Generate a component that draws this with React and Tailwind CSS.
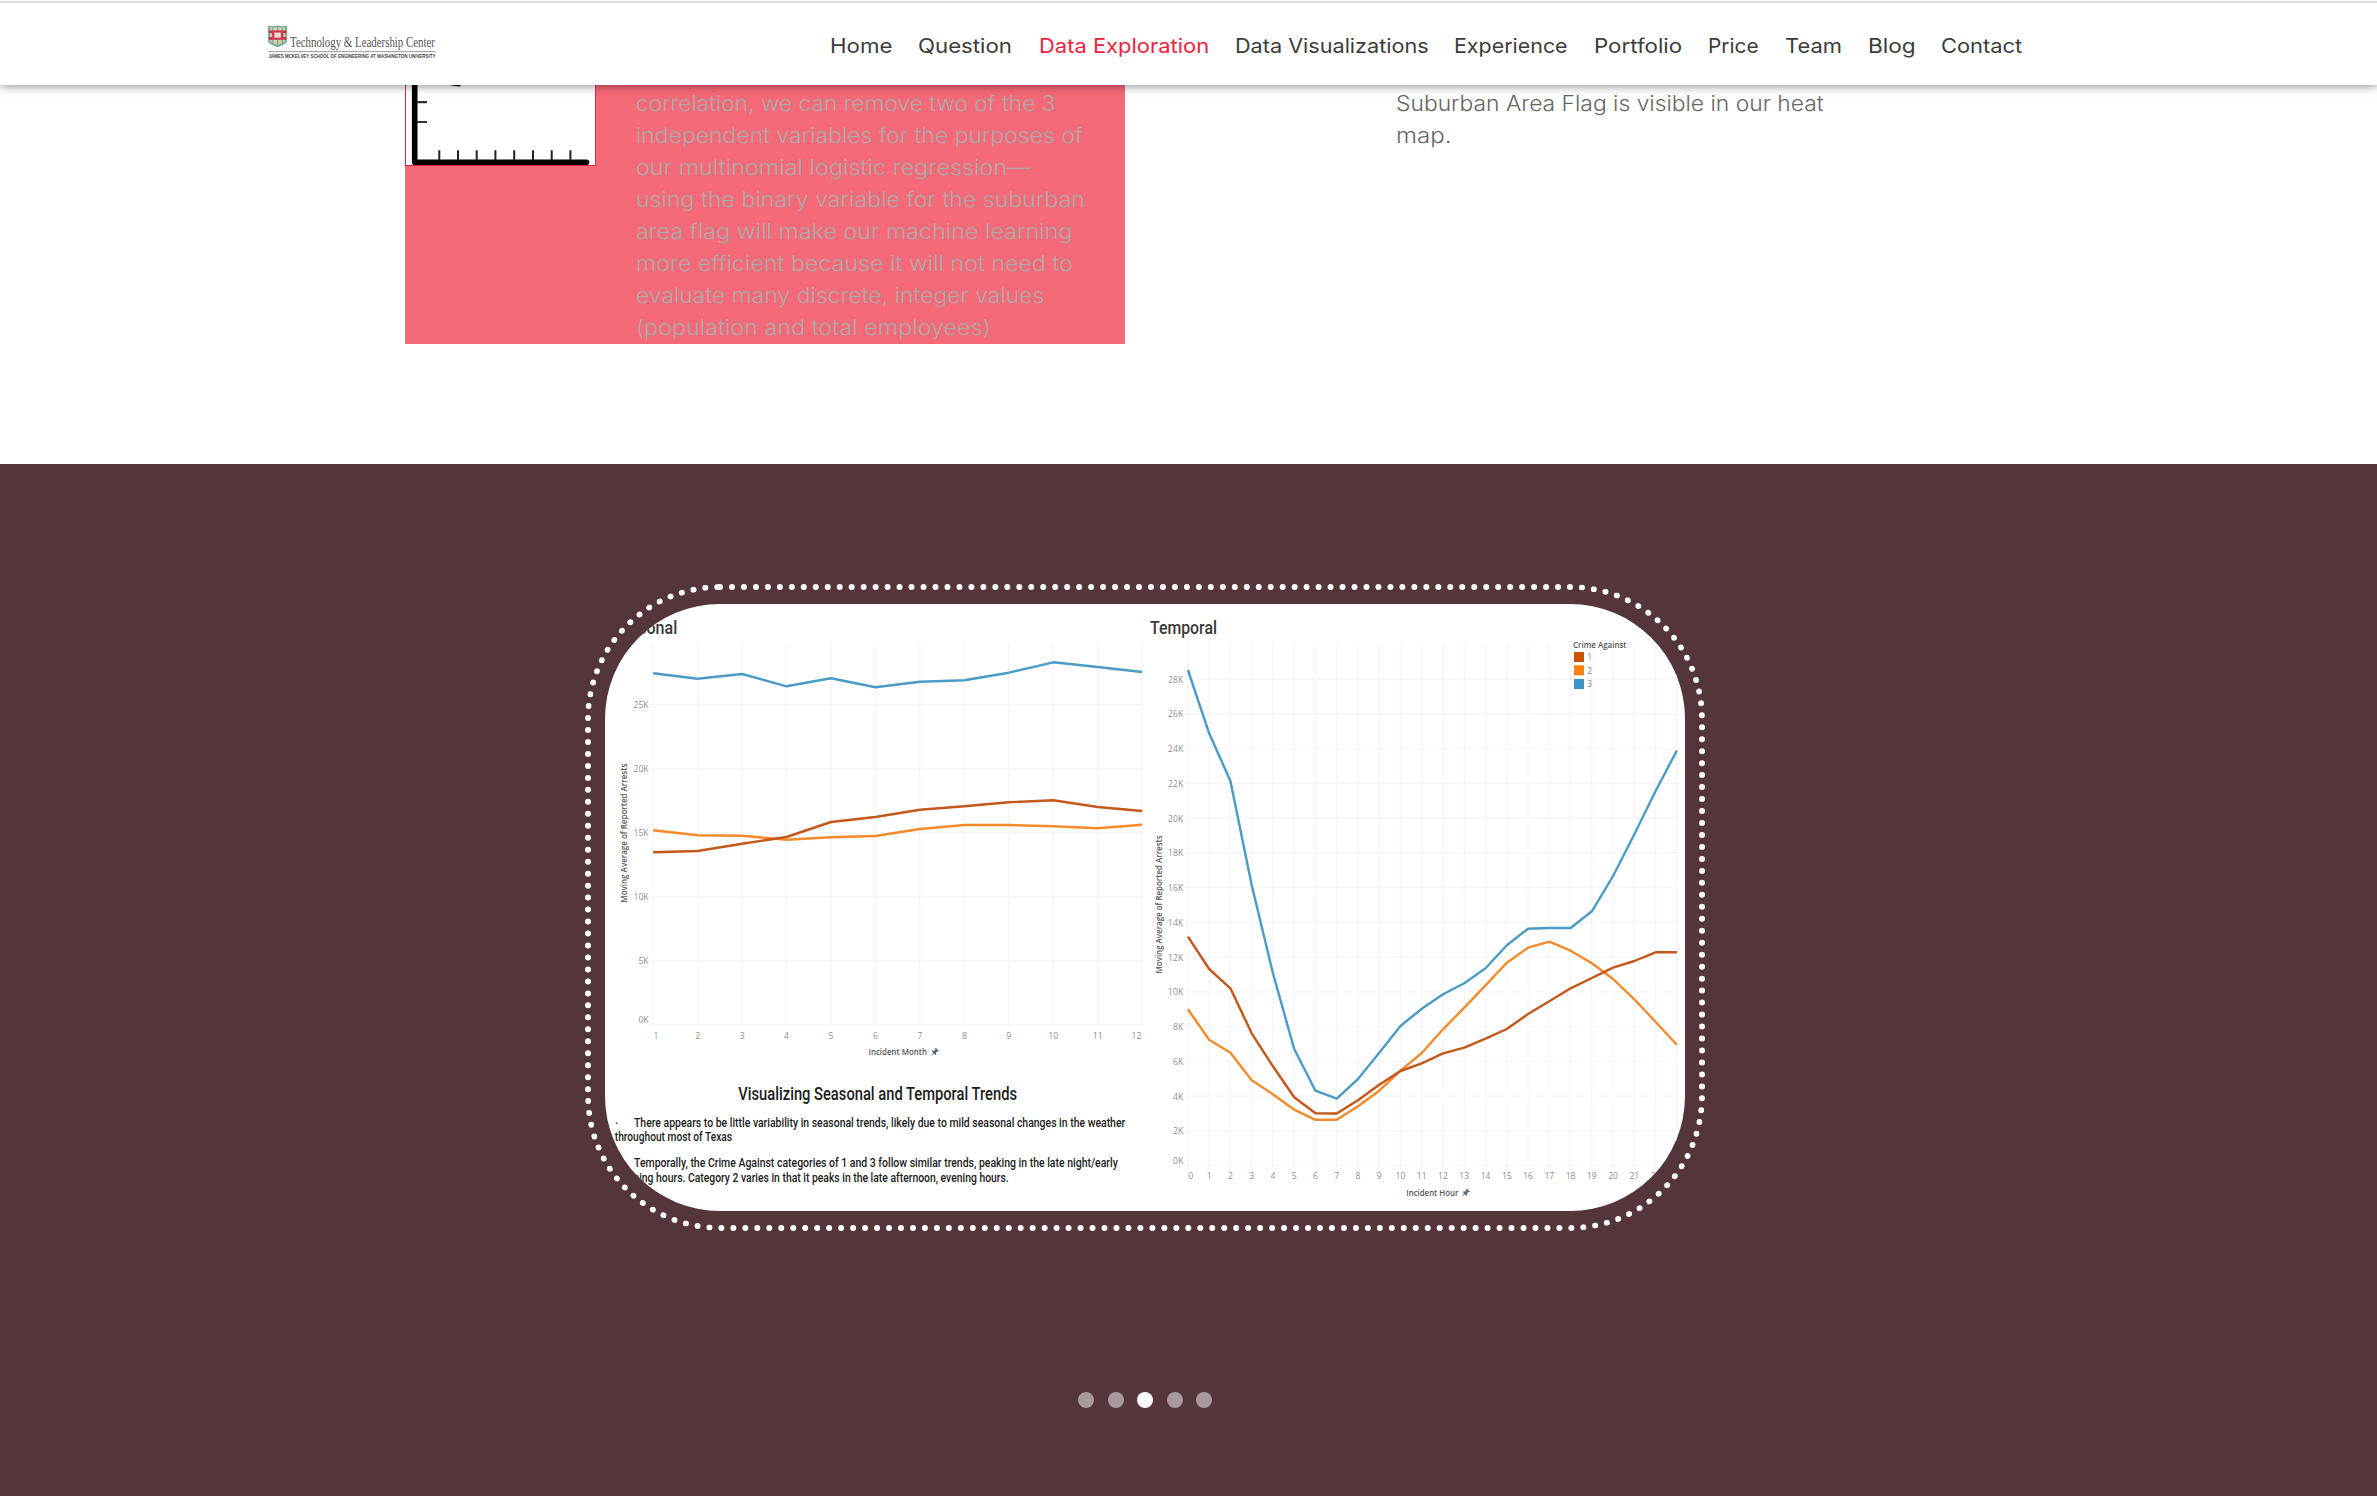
import { useLayoutEffect, useRef, useState } from "react";

// Widens one line of text so that it fills the width it is given.
function FitText({ width, children }) {
  const ref = useRef(null);
  const [scale, setScale] = useState(null);
  useLayoutEffect(() => {
    setScale(width / ref.current.offsetWidth);
  }, [width, children]);
  return (
    <span className="block whitespace-nowrap" style={{ width: `${width}px` }}>
      <span
        ref={ref}
        className="inline-block origin-left"
        style={scale === null ? undefined : { transform: `scaleX(${scale})` }}
      >
        {children}
      </span>
    </span>
  );
}

const NAV = [
  ["Home", 62.4],
  ["Question", 94.5],
  ["Data Exploration", 170],
  ["Data Visualizations", 193.5],
  ["Experience", 113.5],
  ["Portfolio", 88],
  ["Price", 51],
  ["Team", 57],
  ["Blog", 47.5],
  ["Contact", 81],
];

const FEATURE_LINES = [
  ["correlation, we can remove two of the 3", 419.5],
  ["independent variables for the purposes of", 447],
  ["our multinomial logistic regression—", 394.5],
  ["using the binary variable for the suburban", 449.5],
  ["area flag will make our machine learning", 436],
  ["more efficient because it will not need to", 436.5],
  ["evaluate many discrete, integer values", 408.5],
  ["(population and total employees)", 354.5],
];

const BLUE = "#4a9cc6";
const RUST = "#c4571a";
const ORANGE = "#f58a2c";

const MONTH_X = Array.from({ length: 12 }, (_, i) => 653.2 + 44.45 * i);
const MONTH_SERIES = [
  [BLUE, [673.3, 678.7, 674, 686.3, 678.3, 687.3, 681.7, 680.3, 672.7, 662.3, 667, 672]],
  [ORANGE, [830.3, 835.3, 835.7, 839.7, 837.3, 836, 829, 825, 825, 826.3, 828.3, 824.7]],
  [RUST, [852.3, 851, 843.7, 837, 822, 817, 809.7, 806.3, 802.3, 800.3, 807, 811]],
];
const MONTH_Y = [
  ["25K", 704.5],
  ["20K", 768.7],
  ["15K", 832.7],
  ["10K", 896.7],
  ["5K", 960.7],
  ["0K", 1024.7],
];

const HOUR_X = Array.from({ length: 24 }, (_, i) => 1187.9 + 21.26 * i);
const HOUR_SERIES = [
  [BLUE, [670, 733.3, 781, 885, 973.3, 1049, 1090.7, 1098.7, 1079, 1052.7, 1026, 1008.7, 994.3, 983.3, 968.3, 945.3, 928.7, 928, 928, 911.3, 876, 834.3, 791, 750.5]],
  [ORANGE, [1009.3, 1039.7, 1052.7, 1080.3, 1094.3, 1109.7, 1119.8, 1119.8, 1106.3, 1090.7, 1070.7, 1053, 1029.3, 1007.7, 985.3, 962.7, 947.7, 941.7, 950.7, 963.3, 979, 999.3, 1022, 1044.7]],
  [RUST, [936.7, 969, 988.3, 1033.3, 1066.3, 1097.3, 1113.3, 1113.5, 1100.3, 1084.7, 1071, 1063.3, 1053.3, 1047.7, 1038.7, 1029, 1014, 1001.3, 988.3, 978, 967.7, 961, 952.3, 952.3]],
];

const points = (xs, ys) => xs.map((x, i) => `${x},${ys[i]}`).join(" ");

function Series({ xs, series }) {
  return series.map(([color, ys]) => (
    <polyline key={color} points={points(xs, ys)} fill="none" stroke={color} strokeWidth="2.4" strokeLinejoin="round" />
  ));
}

function Pin({ x, y }) {
  return (
    <path
      transform={`translate(${x} ${y})`}
      d="M4.6 0 L8 3 L7.2 3.6 L6.4 3.4 L5 5 L5.2 6.6 L4.4 7.2 L2.8 5.6 L0.4 7.8 L0 7.6 L2.2 5 L0.8 3.4 L1.4 2.8 L3 3 L4.4 1.6 L4.1 0.7 Z"
      fill="#5b6b7f"
    />
  );
}

function CondensedText({ x, y, width, size, color = "#1c1c1c", children }) {
  return (
    <text
      x={x}
      y={y}
      textLength={width}
      lengthAdjust="spacingAndGlyphs"
      fontSize={size}
      fill={color}
      className="font-['Roboto',sans-serif] font-medium"
    >
      {children}
    </text>
  );
}

function AxisTitle({ width, children, ...place }) {
  return (
    <text textLength={width} lengthAdjust="spacingAndGlyphs" fontSize="8.6" fill="#555" className="font-semibold" {...place}>
      {children}
    </text>
  );
}

function TrendCharts() {
  return (
    <svg viewBox="605 604 1080 607" className="block h-full w-full font-['Open_Sans',sans-serif]">
      <g stroke="#f6f6f6" strokeWidth="1.4">
        {MONTH_X.map((x) => (
          <line key={x} x1={x} x2={x} y1="643" y2="1027" />
        ))}
        {MONTH_Y.map(([t, y]) => (
          <line key={t} x1="650" x2="1143" y1={y} y2={y} />
        ))}
        {HOUR_X.map((x) => (
          <line key={x} x1={x} x2={x} y1="644" y2="1169" />
        ))}
        {Array.from({ length: 15 }, (_, i) => (
          <line key={i} x1="1185" x2="1677" y1={679 + 34.76 * i} y2={679 + 34.76 * i} />
        ))}
      </g>

      <CondensedText x={611.3} y={633.6} width={66} size={18.4} color="#3a3a3a">Seasonal</CondensedText>
      <CondensedText x={1150} y={634} width={67} size={18.4} color="#3a3a3a">Temporal</CondensedText>

      <g fontSize="8.6" fill="#8e8e8e">
        {MONTH_Y.map(([t, y]) => (
          <text key={t} x="648.6" y={(t === "0K" ? 1019.5 : y + 0.5) + 3.2} textAnchor="end">{t}</text>
        ))}
        {MONTH_X.map((x, i) => (
          <text key={x} x={i === 0 ? 656 : i === 11 ? 1136.4 : x} y="1038.6" textAnchor="middle">{i + 1}</text>
        ))}
        {Array.from({ length: 15 }, (_, i) => (
          <text key={i} x="1183.2" y={(i === 14 ? 1160.5 : 679.3 + 34.76 * i) + 3.2} textAnchor="end">{`${28 - 2 * i}K`}</text>
        ))}
        {HOUR_X.map((x, i) => (
          <text key={x} x={i === 0 ? 1190.8 : x} y="1179.4" textAnchor="middle">{i}</text>
        ))}
      </g>

      <Series xs={MONTH_X} series={MONTH_SERIES} />
      <Series xs={HOUR_X} series={HOUR_SERIES} />

      <AxisTitle width={139} transform="translate(626.8 902.7) rotate(-90)">Moving Average of Reported Arrests</AxisTitle>
      <AxisTitle width={138} transform="translate(1161.5 973.5) rotate(-90)">Moving Average of Reported Arrests</AxisTitle>
      <AxisTitle width={58.5} x={868.5} y={1054.6}>Incident Month</AxisTitle>
      <AxisTitle width={52} x={1406.3} y={1195.6}>Incident Hour</AxisTitle>
      <AxisTitle width={53.5} x={1573} y={648.3}>Crime Against</AxisTitle>
      <Pin x={931} y={1047.8} />
      <Pin x={1462} y={1188.6} />

      <g fontSize="8.4" fill="#858585">
        <rect x="1574" y="652" width="10" height="10" fill="#c85200" />
        <rect x="1574" y="665.3" width="10" height="10" fill="#ff800e" />
        <rect x="1574" y="679" width="10" height="10" fill="#3a95c6" />
        <text x="1587.3" y="660.4">1</text>
        <text x="1587.3" y="673.8">2</text>
        <text x="1587.3" y="687.3">3</text>
      </g>

      <CondensedText x={738.3} y={1100.4} width={278.7} size={17.8}>Visualizing Seasonal and Temporal Trends</CondensedText>
      <text x="615" y="1127.5" fontSize="12" fill="#1c1c1c">·</text>
      <CondensedText x={634} y={1127.3} width={491.2} size={12}>
        There appears to be little variability in seasonal trends, likely due to mild seasonal changes in the weather
      </CondensedText>
      <CondensedText x={614.8} y={1141.4} width={117.2} size={12}>throughout most of Texas</CondensedText>
      <CondensedText x={634} y={1167.3} width={483.8} size={12}>
        Temporally, the Crime Against categories of 1 and 3 follow similar trends, peaking in the late night/early
      </CondensedText>
      <CondensedText x={614.8} y={1182} width={393.9} size={12}>
        morning hours. Category 2 varies in that it peaks in the late afternoon, evening hours.
      </CondensedText>
    </svg>
  );
}

function Logo() {
  return (
    <svg viewBox="0 0 170 36" className="block h-9 w-[170px] overflow-visible">
      <path d="M0 0.5 L4 1.2 L9.5 0.4 L15 1.2 L19.2 0.5 V15.5 C19.2 19 13.5 20.5 9.6 22.3 C5.5 20.5 0 19 0 15.5 Z" fill="#7fae9c" />
      <path d="M2.2 2.6 H17 V15 C17 17.5 12.5 18.6 9.6 20 C6.6 18.6 2.2 17.5 2.2 15 Z" fill="#dccfae" />
      <path d="M4.8 2.4 V19 M9.6 2.2 V20.6 M14.4 2.4 V19" stroke="#6fa592" strokeWidth="1.2" />
      <rect x="0.8" y="5.4" width="17.6" height="2.8" fill="#c8324f" />
      <rect x="0.8" y="12" width="17.6" height="2.8" fill="#c8324f" />
      <rect x="4" y="6.5" width="11.4" height="7.5" fill="#cf3f58" />
      <rect x="6.4" y="7.6" width="6.4" height="5" fill="#ecdccb" />
      <text x="22" y="21.6" fontSize="13.8" fill="#555" textLength="145" lengthAdjust="spacingAndGlyphs" className="font-['Liberation_Serif',serif]">
        Technology &amp; Leadership Center
      </text>
      <rect x="0.2" y="26" width="167.4" height="1.2" fill="#a8a8a8" />
      <text x="0.4" y="33.2" fontSize="5.8" fill="#444" textLength="167" lengthAdjust="spacingAndGlyphs" className="font-['Liberation_Sans',sans-serif] font-bold">
        JAMES MCKELVEY SCHOOL OF ENGINEERING AT WASHINGTON UNIVERSITY
      </text>
    </svg>
  );
}

function ScatterThumb() {
  return (
    <svg viewBox="406 85 189 80" className="block h-20 w-[189px]">
      <path d="M449 85 H461 L459.5 86.4 L455 86 Z" fill="#000" />
      <path d="M414.7 80 V162.2 H586.6" fill="none" stroke="#000" strokeWidth="5.6" strokeLinecap="round" strokeLinejoin="round" />
      <path d="M417 102.2 H427 M417 122 H427" stroke="#333" strokeWidth="2.2" />
      <path
        d="M439.3 150.3 V160 M458 150.3 V160 M476.7 150.3 V160 M495.4 150.3 V160 M514.2 150.3 V160 M533 150.3 V160 M551.7 150.3 V160 M570.4 150.3 V160"
        stroke="#222"
        strokeWidth="2"
      />
    </svg>
  );
}

export default function App() {
  return (
    <div className="flex h-[1496px] w-[2377px] flex-col overflow-hidden bg-white font-['Inter',sans-serif]">
      <header className="relative z-10 flex h-[85px] shrink-0 items-start bg-white shadow-[0_0_10px_rgba(0,0,0,0.55)]">
        <div className="flex w-full flex-col">
          <div className="mt-px h-0.5 bg-[#dadddb]" />
          <div className="flex items-start pl-[267.5px]">
            <div className="pt-[22px]">
              <Logo />
            </div>
            <nav className="ml-[392.3px] flex gap-[26px] pt-[27.5px] text-[20px] leading-[30px] font-normal text-[#3c3c3c]">
              {NAV.map(([label, width]) => (
                <a key={label} className={label === "Data Exploration" ? "text-[#f0213f]" : ""}>
                  <FitText width={width}>{label}</FitText>
                </a>
              ))}
            </nav>
          </div>
        </div>
      </header>

      <main className="flex h-[379px] shrink-0 items-start pl-[405px] text-[21px] leading-8">
        <div className="flex h-[259px] w-[720px] bg-[#f66978]">
          <div className="h-[81px] w-[191px] shrink-0 border-x border-b border-[#e8213f] bg-white">
            <ScatterThumb />
          </div>
          <div className="ml-[39.5px] flex flex-col pt-[3px] font-light text-[#ababab]">
            {FEATURE_LINES.map(([line, width]) => (
              <div key={line} className="h-8">
                <FitText width={width}>{line}</FitText>
              </div>
            ))}
          </div>
        </div>
        <div className="ml-[270.5px] flex flex-col pt-[3px] font-light text-[#666]">
          <div className="h-8">
            <FitText width={427.5}>Suburban Area Flag is visible in our heat</FitText>
          </div>
          <div className="h-8">
            <FitText width={55}>map.</FitText>
          </div>
        </div>
      </main>

      <section className="flex h-[1032px] shrink-0 flex-col bg-[#54363a] pt-[120px] pl-[585px]">
        <div className="h-[647px] w-[1120px] rounded-[135px] border-[6px] border-dotted border-white p-[14px]">
          <div className="h-[607px] w-[1080px] overflow-hidden rounded-[115px] bg-white">
            <TrendCharts />
          </div>
        </div>
        <div className="mt-[161px] flex w-[1120px] justify-center gap-[13.5px]">
          <span className="size-4 rounded-full bg-[#a99b9c]" />
          <span className="size-4 rounded-full bg-[#a99b9c]" />
          <span className="size-4 rounded-full bg-white" />
          <span className="size-4 rounded-full bg-[#a99b9c]" />
          <span className="size-4 rounded-full bg-[#a99b9c]" />
        </div>
      </section>
    </div>
  );
}
